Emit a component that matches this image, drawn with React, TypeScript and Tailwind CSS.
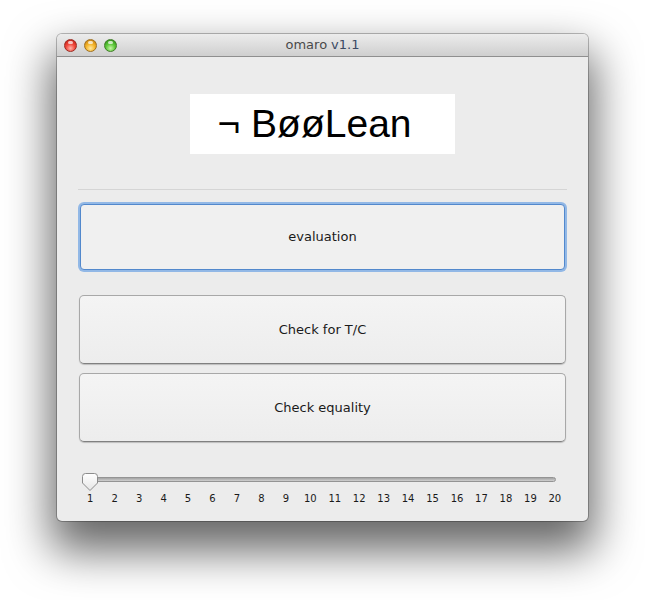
import React from 'react';

const ticks = Array.from({ length: 20 }, (_, i) => i + 1);

function TrafficLight({ color }: { color: 'red' | 'yellow' | 'green' }) {
  const styles = {
    red: 'bg-[radial-gradient(circle_at_50%_75%,#ffb3a8_0%,#f2483c_45%,#b5160c_100%)] border-[#9c2a22]',
    yellow: 'bg-[radial-gradient(circle_at_50%_75%,#ffe9a0_0%,#f5b52a_45%,#b9740a_100%)] border-[#a0701e]',
    green: 'bg-[radial-gradient(circle_at_50%_75%,#c6f5a6_0%,#5ec93a_45%,#26820f_100%)] border-[#3e7d26]',
  };
  return (
    <div className={`relative w-[13px] h-[13px] rounded-full border ${styles[color]}`}>
      <div className="absolute left-[3px] top-[1px] w-[5px] h-[3px] rounded-full bg-white/70" />
    </div>
  );
}

function SliderThumb() {
  return (
    <svg width="18" height="20" viewBox="0 0 18 20">
      <defs>
        <linearGradient id="thumbFill" x1="0" y1="0" x2="0" y2="1">
          <stop offset="0" stopColor="#ffffff" />
          <stop offset="1" stopColor="#e6e6e6" />
        </linearGradient>
      </defs>
      <path
        d="M1.5 4.5 Q1.5 1.5 4.5 1.5 L13.5 1.5 Q16.5 1.5 16.5 4.5 L16.5 11 L9 18.5 L1.5 11 Z"
        fill="url(#thumbFill)"
        stroke="#8c8c8c"
        strokeWidth="1"
      />
    </svg>
  );
}

export default function App() {
  return (
    <div className="w-[645px] h-[600px] bg-white pt-[34px] pl-[57px] font-['DejaVu_Sans',sans-serif]">
      <div className="w-[531px] h-[487px] flex flex-col rounded-[5px] bg-[#ececec] shadow-[0_24px_45px_6px_rgba(0,0,0,0.6),0_0_0_1px_rgba(0,0,0,0.25)]">
        {/* Title bar */}
        <div className="relative h-[23px] flex items-center gap-[7px] pl-[7px] rounded-t-[5px] border-b border-[#8f8f8f] bg-gradient-to-b from-[#ececec] to-[#cfcfcf]">
          <TrafficLight color="red" />
          <TrafficLight color="yellow" />
          <TrafficLight color="green" />
          <div className="absolute inset-0 flex items-center justify-center text-[13px] text-[#4a4a4a]">
            omaro <span className="ml-[4px] text-[#3b4a63]">v1.1</span>
          </div>
        </div>

        {/* Content */}
        <div className="flex-1 flex flex-col pt-[37px]">
          <div className="self-center w-[265px] h-[60px] bg-white flex items-center justify-center pr-4">
            <span className="font-['Liberation_Sans',Arial,sans-serif] text-[39px] text-black">¬ BøøLean</span>
          </div>

          <div className="mt-[35px] mx-[21px] h-px bg-[#d5d5d5]" />

          <button className="mt-[14px] mx-[23px] h-[66px] rounded-[4px] border border-[#5288cc] bg-[#f0f0f0] shadow-[0_0_0_2px_#92b8e6] text-[13px] text-[#1a1a1a]">
            evaluation
          </button>

          <button className="mt-[25px] mx-[22px] h-[69px] rounded-[5px] border border-[#a8a8a8] border-b-[#808080] bg-gradient-to-b from-[#f4f4f4] to-[#ededed] shadow-[0_1px_1px_rgba(0,0,0,0.2)] text-[13px] text-[#1a1a1a]">
            Check for T/C
          </button>

          <button className="mt-[9px] mx-[22px] h-[69px] rounded-[5px] border border-[#a8a8a8] border-b-[#808080] bg-gradient-to-b from-[#f4f4f4] to-[#ededed] shadow-[0_1px_1px_rgba(0,0,0,0.2)] text-[13px] text-[#1a1a1a]">
            Check equality
          </button>

          {/* Slider */}
          <div className="mt-[30px] mx-[21px]">
            <div className="relative h-[20px]">
              <div className="absolute left-[12px] right-[11px] top-[5px] h-[5px] rounded-full border border-[#949494] bg-gradient-to-b from-[#a3a3a3] to-[#d0d0d0]" />
              <div className="absolute left-[3px] top-0">
                <SliderThumb />
              </div>
            </div>
            <div className="flex mt-[1px]">
              {ticks.map((t) => (
                <span key={t} className="flex-1 text-center text-[10px] leading-[12px] text-[#1a1a1a]">
                  {t}
                </span>
              ))}
            </div>
          </div>
        </div>
      </div>
    </div>
  );
}
